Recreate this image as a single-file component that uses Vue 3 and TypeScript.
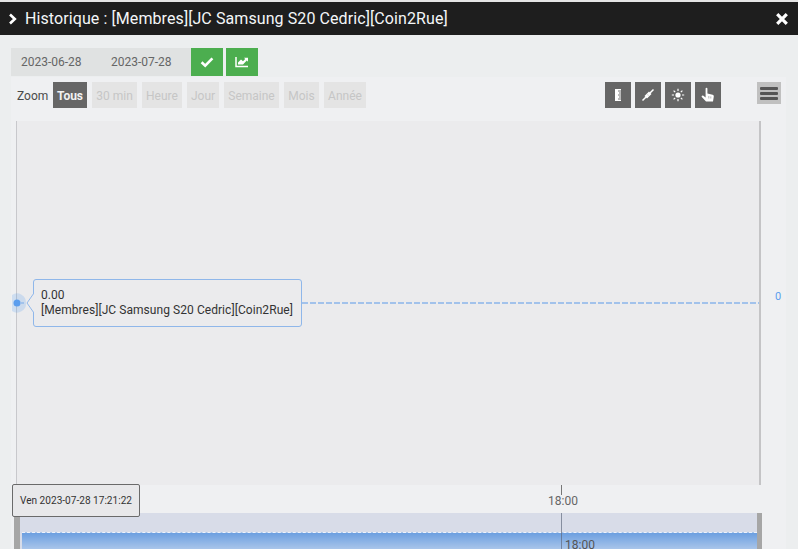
<script setup lang="ts">
const ranges: { label: string; width: number; active?: boolean }[] = [
  { label: 'Tous', width: 34, active: true },
  { label: '30 min', width: 45 },
  { label: 'Heure', width: 40 },
  { label: 'Jour', width: 32 },
  { label: 'Semaine', width: 55 },
  { label: 'Mois', width: 35 },
  { label: 'Année', width: 42 },
]
</script>

<template>
  <div class="page">
    <header class="head">
      <svg class="chev" width="10" height="12" viewBox="0 0 10 12"><path d="M2 1.5 L6.8 6 L2 10.5" fill="none" stroke="#fff" stroke-width="2.6" /></svg>
      <span class="title">Historique : [Membres][JC Samsung S20 Cedric][Coin2Rue]</span>
      <svg class="close" width="14" height="14" viewBox="0 0 14 14"><path d="M2.2 2.2 L11.8 11.8 M11.8 2.2 L2.2 11.8" stroke="#fff" stroke-width="3.2" /></svg>
    </header>

    <div class="dates">
      <span class="date">2023-06-28</span>
      <span class="date second">2023-07-28</span>
      <button class="go">
        <svg width="14" height="12" viewBox="0 0 14 12"><path d="M1.6 6.2 L5.2 9.6 L12.4 2.4" fill="none" stroke="#fff" stroke-width="2.6" /></svg>
      </button>
      <button class="go">
        <svg width="14" height="12" viewBox="0 0 14 12"><path d="M1 1 V10.5 H13" fill="none" stroke="#fff" stroke-width="1.5" /><path d="M3 8.4 V6.4 L6 3.6 L8 5.2 L10.2 3 L9 1.8 H13 V5.8 L11.8 4.6 L8 8.4 Z" fill="#fff" /></svg>
      </button>
    </div>

    <section class="chart">
      <div class="toolbar">
        <span class="zoom">Zoom</span>
        <span
          v-for="r in ranges"
          :key="r.label"
          class="range"
          :class="{ on: r.active }"
          :style="{ width: r.width + 'px' }"
        >{{ r.label }}</span>
        <div class="tools">
          <span class="tool">
            <svg width="14" height="14" viewBox="0 0 14 14"><path d="M4 1 H10 V13 H4 Z" fill="#fff" /><path d="M7 3 H10 M8 5 H10 M7 7 H10 M8 9 H10 M7 11 H10" stroke="#666" stroke-width="0.9" /></svg>
          </span>
          <span class="tool">
            <svg width="14" height="14" viewBox="0 0 14 14"><path d="M1.5 12.5 L5 9 M9 5 L12.5 1.5" stroke="#fff" stroke-width="1.5" /><path d="M3.5 8 L6 5.5 L6.8 7.2 L8.5 8 L6 10.5 Z M10.5 6 L8 8.5 L7.2 6.8 L5.5 6 L8 3.5 Z" fill="#fff" /></svg>
          </span>
          <span class="tool">
            <svg width="14" height="14" viewBox="0 0 14 14"><circle cx="7" cy="7" r="2.6" fill="#fff" /><path d="M7 .8 V3 M7 11 V13.2 M.8 7 H3 M11 7 H13.2 M2.6 2.6 L4.2 4.2 M9.8 9.8 L11.4 11.4 M11.4 2.6 L9.8 4.2 M4.2 9.8 L2.6 11.4" stroke="#fff" stroke-width="1.2" /></svg>
          </span>
          <span class="tool">
            <svg width="14" height="16" viewBox="0 0 14 16"><path d="M4.6 1.6 C4.6 .6 6.4 .6 6.4 1.6 V6.6 L11.6 7.8 C12.6 8.1 12.9 8.8 12.8 9.6 L12 14.6 H5 L.8 10 C.2 9 1.4 7.9 2.4 8.8 L4.6 10.4 Z" fill="#fff" /><path d="M7.8 9 V11.5 M9.8 9.4 V11.5" stroke="#999" stroke-width="0.7" /></svg>
          </span>
        </div>
        <span class="menu"><i></i><i></i><i></i></span>
      </div>

      <div class="plot">
        <svg class="series" width="745" height="364" viewBox="0 0 745 364">
          <path d="M-4 174 A9 9 0 0 1 10 182 A9 9 0 0 1 -4 190 Z" fill="#5c9eee" fill-opacity="0.22" />
          <circle cx="1" cy="182" r="3.5" fill="#5c9eee" />
          <path d="M5 182 H10" stroke="#8ab5ea" stroke-width="1.3" stroke-dasharray="3 2" fill="none" />
          <path d="M286 182 H743" stroke="#8ab5ea" stroke-width="1.3" stroke-dasharray="6 2" fill="none" />
        </svg>
        <div class="tip">
          <svg class="tail" width="8" height="20" viewBox="0 0 8 20"><path d="M8 0 L1 10 L8 20" fill="#ebebed" stroke="#8fb7ea" /></svg>
          <div>0.00</div>
          <div>[Membres][JC Samsung S20 Cedric][Coin2Rue]</div>
        </div>
        <span class="zero">0</span>
      </div>

      <div class="axis">
        <i class="tick"></i>
        <span class="axis-label">18:00</span>
        <div class="date-tip">Ven 2023-07-28 17:21:22</div>
      </div>

      <div class="nav">
        <i class="handle"></i>
        <div class="mask">
          <div class="fill"></div>
          <i class="nav-line"></i>
          <span class="nav-label">18:00</span>
        </div>
        <i class="handle right"></i>
      </div>
    </section>
  </div>
</template>

<style>
html, body { margin: 0; padding: 0; background: #eceeef; }
</style>

<style scoped>
.page {
  width: 798px;
  height: 549px;
  overflow: hidden;
  background: #eceeef;
  font-family: Roboto, "Liberation Sans", sans-serif;
  border-top: 2px solid #e4e4e4;
  box-sizing: border-box;
}
.head {
  height: 33px;
  background: #1e1e1e;
  color: #f4f6f8;
  display: flex;
  align-items: center;
  padding: 0 9px 0 8px;
}
.chev { margin-right: 7px; }
.title { font-size: 16px; letter-spacing: 0.09px; flex: 1; }
.dates {
  margin: 13px 0 0 11px;
  display: flex;
  height: 28px;
  align-items: stretch;
}
.date {
  background: #e0e2e2;
  color: #666;
  font-size: 12px;
  line-height: 28px;
  padding-left: 10px;
  width: 80px;
}
.go {
  width: 32px;
  border: 0;
  padding: 0;
  background: #4cae4f;
  display: flex;
  align-items: center;
  justify-content: center;
}
.go + .go { margin-left: 3px; }
.chart {
  margin: 1px 12px 0 11px;
  height: 472px;
  background: #eff0f2;
  position: relative;
}
.toolbar {
  height: 44px;
  display: flex;
  align-items: flex-start;
  padding: 5px 0 0 6px;
  box-sizing: border-box;
}
.zoom {
  font-size: 12px;
  color: #4a4a4a;
  line-height: 28px;
  width: 36px;
}
.range {
  height: 26px;
  line-height: 28px;
  margin-right: 5px;
  text-align: center;
  font-size: 12px;
  background: #e4e4e4;
  color: #c6c6c6;
}
.range.on {
  background: #666;
  color: #f2f2f2;
  font-weight: 700;
}
.tools {
  display: flex;
  gap: 4px;
  margin-left: 234px;
}
.tool {
  width: 26px;
  height: 26px;
  background: #666;
  display: flex;
  align-items: center;
  justify-content: center;
}
.menu {
  margin-left: 36px;
  width: 24px;
  height: 22px;
  background: #c0c0c0;
  display: flex;
  flex-direction: column;
  justify-content: center;
  align-items: center;
  gap: 2px;
}
.menu i {
  display: block;
  width: 18px;
  height: 3px;
  border-radius: 1px;
  background: #555;
}
.plot {
  position: relative;
  margin-left: 5px;
  width: 745px;
  height: 364px;
  background: #ebebed;
  border-left: 1px solid #c8c8cc;
  border-right: 2px solid #c4c4c6;
  box-sizing: border-box;
}
.series {
  position: absolute;
  left: -1px;
  top: 0;
  overflow: visible;
}
.tip {
  position: absolute;
  left: 16px;
  top: 158px;
  width: 269px;
  height: 48px;
  box-sizing: border-box;
  padding: 8px 0 0 7px;
  background: #ebebed;
  border: 1px solid #8fb7ea;
  border-radius: 3px;
  font-size: 12px;
  letter-spacing: 0.06px;
  line-height: 15px;
  color: #333;
}
.tail {
  position: absolute;
  left: -8px;
  top: 13px;
}
.zero {
  position: absolute;
  left: 758px;
  top: 169px;
  font-size: 11px;
  line-height: 13px;
  color: #5c9eee;
}
.axis {
  position: relative;
  height: 28px;
}
.tick {
  position: absolute;
  left: 550px;
  top: 0;
  width: 1px;
  height: 10px;
  background: #777;
}
.axis-label {
  position: absolute;
  left: 537px;
  top: 9px;
  font-size: 12px;
  line-height: 14px;
  color: #666;
}
.date-tip {
  position: absolute;
  left: 1px;
  top: -1px;
  width: 128px;
  height: 33px;
  box-sizing: border-box;
  background: #e8e8ea;
  border: 1px solid #6a6a6a;
  border-radius: 2px;
  font-size: 10.1px;
  line-height: 31px;
  text-align: center;
  color: #333;
  z-index: 2;
}
.nav {
  display: flex;
  margin-left: 3px;
  width: 748px;
  height: 36px;
}
.handle {
  width: 6px;
  background: #a6a6a6;
}
.handle.right { width: 5px; }
.mask {
  flex: 1;
  position: relative;
  background: #d8dce8;
  overflow: hidden;
}
.fill {
  position: absolute;
  left: 2px;
  right: 0;
  top: 19px;
  bottom: 0;
  background: linear-gradient(#6c9fe0, #a9c5ea);
  border-top: 1px dashed #eef2fa;
}
.nav-line {
  position: absolute;
  left: 541px;
  top: 0;
  bottom: 0;
  width: 1px;
  background: rgba(90, 100, 120, 0.65);
}
.nav-label {
  position: absolute;
  left: 545px;
  top: 25px;
  font-size: 12px;
  line-height: 14px;
  color: #555;
}
</style>
